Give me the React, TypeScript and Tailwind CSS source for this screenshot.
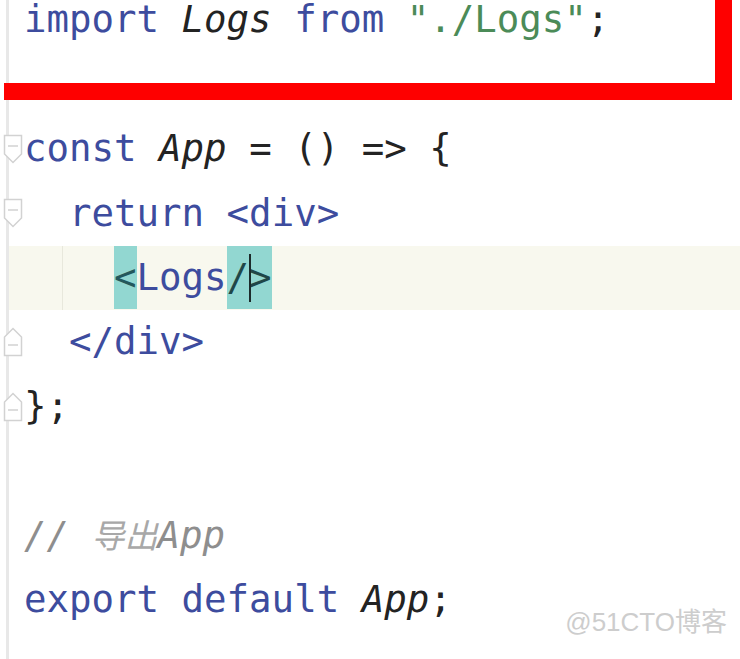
import React from 'react';

const mono = { fontFamily: '"DejaVu Sans Mono", "Noto Sans CJK SC", monospace' };

const kw = 'text-[#3d4c9e]';
const ident = 'italic text-[#232323]';
const str = 'text-[#4b8b58]';
const plain = 'text-[#232323]';

function FoldMarker({ end }: { end?: boolean }) {
  return (
    <svg
      className="absolute left-[3px] top-1/2 -translate-y-1/2"
      width="20"
      height="30"
      viewBox="0 0 20 30"
    >
      {end ? (
        <path d="M1.5 28.5 H18.5 V10 L10 1.5 L1.5 10 Z" fill="#fff" stroke="#d2d2d2" strokeWidth="1.5" />
      ) : (
        <path d="M1.5 1.5 H18.5 V20 L10 28.5 L1.5 20 Z" fill="#fff" stroke="#d2d2d2" strokeWidth="1.5" />
      )}
      <path d={end ? 'M5 18 H15' : 'M5 12 H15'} stroke="#d2d2d2" strokeWidth="1.5" />
    </svg>
  );
}

function Line({
  children,
  fold,
  active,
}: {
  children?: React.ReactNode;
  fold?: 'start' | 'end';
  active?: boolean;
}) {
  return (
    <div className="relative flex items-center h-[64.4px]">
      {active && <div className="absolute left-[9px] right-0 top-0 bottom-0 bg-[#f8f8ee]" />}
      {active && <div className="absolute left-[62px] top-0 bottom-0 w-px bg-[#e8e8dc]" />}
      {fold && <FoldMarker end={fold === 'end'} />}
      <div className="pl-[24px] whitespace-pre relative">{children}</div>
    </div>
  );
}

export default function App() {
  return (
    <div className="relative w-[740px] h-[659px] overflow-hidden bg-white" style={mono}>
      {/* gutter */}
      <div className="absolute left-[6px] top-0 bottom-0 w-[3px] bg-[#e8e8e8]" />

      <div className="relative mt-[-12px] text-[37.4px] leading-none">
        <Line>
          <span className={kw}>import </span>
          <span className={ident}>Logs </span>
          <span className={kw}>from </span>
          <span className={str}>"./Logs"</span>
          <span className={plain}>;</span>
        </Line>
        <Line />
        <Line fold="start">
          <span className={kw}>const </span>
          <span className={ident}>App </span>
          <span className={plain}>= () =&gt; {'{'}</span>
        </Line>
        <Line fold="start">
          <span className={kw}>  return </span>
          <span className={kw}>&lt;div&gt;</span>
        </Line>
        <Line active>
          <span>    </span>
          <span className="inline-block leading-[63px] bg-[#92d7d1] text-[#24585c]">&lt;</span>
          <span className={kw}>Logs</span>
          <span className="relative inline-block leading-[63px] bg-[#92d7d1] text-[#1f4748]">
            /&gt;
            <span className="absolute left-[22px] top-[8px] w-[2px] h-[48px] bg-[#1c2b2b]" />
          </span>
        </Line>
        <Line fold="end">
          <span className={kw}>  &lt;/div&gt;</span>
        </Line>
        <Line fold="end">
          <span className={plain}>{'};'}</span>
        </Line>
        <Line />
        <Line>
          <span className="italic text-[#8e8e8e]">
            //{' '}
            <span className="text-[33px] text-[#a8a8a8]" style={{ fontFamily: '"Noto Sans CJK SC", sans-serif' }}>
              导出
            </span>
            App
          </span>
        </Line>
        <Line>
          <span className={kw}>export default </span>
          <span className={ident}>App</span>
          <span className={plain}>;</span>
        </Line>
      </div>

      {/* annotation box */}
      <div className="absolute left-[4px] top-[-20px] w-[728px] h-[120px] border-r-[17px] border-b-[17px] border-[#fe0000]" />

      {/* watermark */}
      <div
        className="absolute right-[13px] bottom-[24px] text-[26px] text-[#cdcdcd] leading-none"
        style={{ fontFamily: '"Liberation Sans", "Noto Sans CJK SC", sans-serif' }}
      >
        @51CTO博客
      </div>
    </div>
  );
}
